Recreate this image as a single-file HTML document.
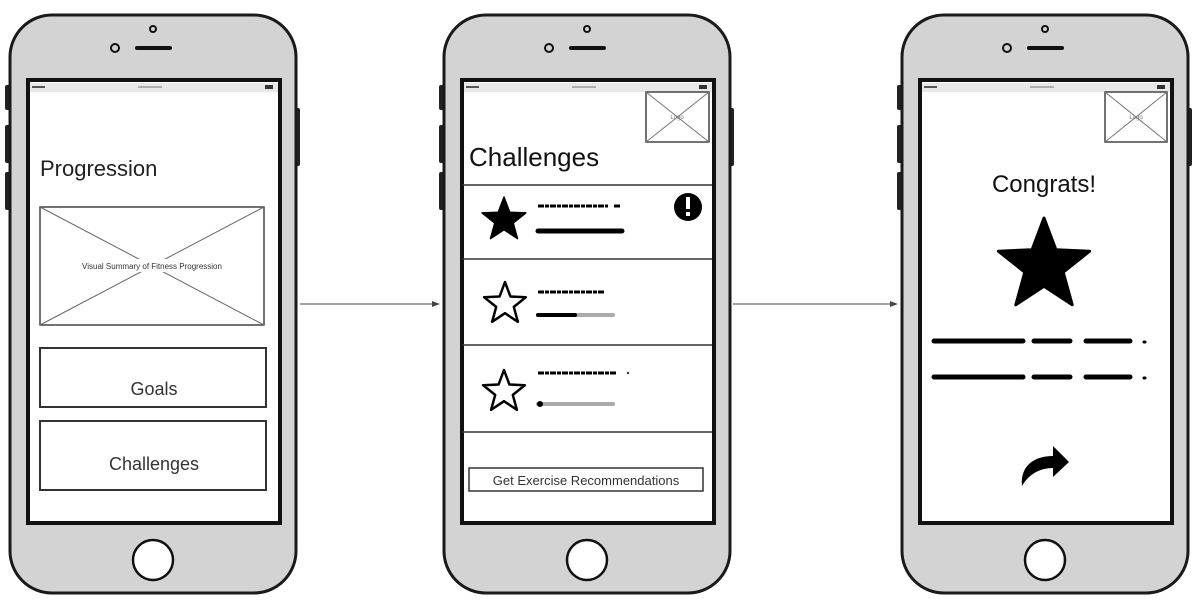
<!DOCTYPE html>
<html><head><meta charset="utf-8"><style>
html,body{margin:0;padding:0;background:#fff;width:1200px;height:604px;overflow:hidden}
svg{display:block}
text{font-family:"Liberation Sans",sans-serif}
</style></head><body>
<svg width="1200" height="604" viewBox="0 0 1200 604" xmlns="http://www.w3.org/2000/svg">
<defs>
<g id="phone">
  <rect x="5" y="85" width="6" height="25" rx="2" fill="#222"/>
  <rect x="5" y="125" width="6" height="38" rx="2" fill="#222"/>
  <rect x="5" y="172" width="6" height="38" rx="2" fill="#222"/>
  <rect x="294" y="108" width="6" height="58" rx="2" fill="#222"/>
  <rect x="10" y="15" width="286" height="578" rx="42" fill="#d3d3d3" stroke="#1a1a1a" stroke-width="3"/>
  <circle cx="153" cy="29" r="3" fill="none" stroke="#111" stroke-width="2"/>
  <circle cx="115" cy="48" r="4" fill="none" stroke="#111" stroke-width="2"/>
  <line x1="137" y1="48" x2="170" y2="48" stroke="#111" stroke-width="4" stroke-linecap="round"/>
  <rect x="28" y="80" width="252" height="443" fill="#fff" stroke="#111" stroke-width="4"/>
  <rect x="30" y="83" width="248" height="9" fill="#e8e8e8"/>
  <line x1="32" y1="87" x2="45" y2="87" stroke="#555" stroke-width="2"/>
  <line x1="138" y1="87" x2="162" y2="87" stroke="#999" stroke-width="1.5"/>
  <rect x="265" y="85" width="8" height="4" fill="#333"/>
  <circle cx="153" cy="560" r="20" fill="#fff" stroke="#111" stroke-width="2.5"/>
</g>
</defs>

<use href="#phone"/>
<use href="#phone" transform="translate(434,0)"/>
<use href="#phone" transform="translate(892,0)"/>

<line x1="300" y1="304" x2="436" y2="304" stroke="#444" stroke-width="1"/>
<polygon points="440,304 432,301 432,307" fill="#444"/>
<line x1="733" y1="304" x2="894" y2="304" stroke="#444" stroke-width="1"/>
<polygon points="898,304 890,301 890,307" fill="#444"/>

<!-- Phone 1 -->
<text x="40" y="176" font-size="22" fill="#222">Progression</text>
<rect x="40" y="207" width="224" height="118" fill="#fff" stroke="#444" stroke-width="1.5"/>
<line x1="40" y1="207" x2="264" y2="325" stroke="#666" stroke-width="1"/>
<line x1="264" y1="207" x2="40" y2="325" stroke="#666" stroke-width="1"/>
<rect x="60" y="259" width="184" height="13" fill="#fff"/>
<text x="152" y="269" font-size="8" text-anchor="middle" fill="#333">Visual Summary of Fitness Progression</text>
<rect x="40" y="348" width="226" height="59" fill="#fff" stroke="#333" stroke-width="2"/>
<text x="154" y="395" font-size="18" text-anchor="middle" fill="#333">Goals</text>
<rect x="40" y="421" width="226" height="69" fill="#fff" stroke="#333" stroke-width="2"/>
<text x="154" y="470" font-size="18" text-anchor="middle" fill="#333">Challenges</text>

<!-- Phone 2 -->
<rect x="646" y="92" width="63" height="50" fill="#fff" stroke="#444" stroke-width="1.5"/>
<line x1="646" y1="92" x2="709" y2="142" stroke="#777"/>
<line x1="709" y1="92" x2="646" y2="142" stroke="#777"/>
<text x="677" y="119" font-size="6" text-anchor="middle" fill="#777">Logo</text>
<text x="469" y="166" font-size="26" fill="#111">Challenges</text>
<g stroke="#333" stroke-width="1.5">
<line x1="462" y1="185" x2="712" y2="185"/>
<line x1="462" y1="259" x2="712" y2="259"/>
<line x1="462" y1="345" x2="712" y2="345"/>
<line x1="462" y1="432" x2="712" y2="432"/>
</g>
<polygon points="504,197 509.7,212.2 525.9,212.9 513.2,223 517.5,238.6 504,229.7 490.5,238.6 494.8,223 482.1,212.9 498.3,212.2" fill="#000" stroke="#000" stroke-width="1.5" stroke-linejoin="round"/>
<circle cx="688" cy="207" r="14" fill="#000"/>
<rect x="686" y="197" width="4" height="12" fill="#fff"/>
<rect x="686" y="212" width="4" height="4" fill="#fff"/>
<line x1="538" y1="206" x2="608" y2="206" stroke="#000" stroke-width="3" stroke-dasharray="6 1 4 1"/>
<line x1="614" y1="206" x2="620" y2="206" stroke="#000" stroke-width="3"/>
<line x1="538" y1="231" x2="622" y2="231" stroke="#000" stroke-width="5" stroke-linecap="round"/>
<polygon points="505,282 510.4,296.5 525.9,297.2 513.8,306.9 517.9,321.8 505,313.2 492.1,321.8 496.2,306.9 484.1,297.2 499.6,296.5" fill="#fff" stroke="#000" stroke-width="2.5" stroke-linejoin="round"/>
<line x1="538" y1="292" x2="604" y2="292" stroke="#000" stroke-width="3" stroke-dasharray="6 1 4 1"/>
<line x1="538" y1="315" x2="613" y2="315" stroke="#aaa" stroke-width="4" stroke-linecap="round"/>
<line x1="538" y1="315" x2="575" y2="315" stroke="#000" stroke-width="4" stroke-linecap="round"/>
<polygon points="504,370 509.4,384.5 524.9,385.2 512.8,394.9 516.9,409.8 504,401.2 491.1,409.8 495.2,394.9 483.1,385.2 498.6,384.5" fill="#fff" stroke="#000" stroke-width="2.5" stroke-linejoin="round"/>
<line x1="538" y1="373" x2="616" y2="373" stroke="#000" stroke-width="3" stroke-dasharray="6 1 4 1"/>
<circle cx="628" cy="373" r="1.2" fill="#333"/>
<line x1="538" y1="404" x2="613" y2="404" stroke="#aaa" stroke-width="4" stroke-linecap="round"/>
<circle cx="540" cy="404" r="3" fill="#000"/>
<rect x="469" y="468" width="234" height="23" fill="#fff" stroke="#333" stroke-width="1.5"/>
<text x="586" y="485" font-size="13" text-anchor="middle" fill="#333">Get Exercise Recommendations</text>

<!-- Phone 3 -->
<rect x="1105" y="92" width="62" height="50" fill="#fff" stroke="#444" stroke-width="1.5"/>
<line x1="1105" y1="92" x2="1167" y2="142" stroke="#777"/>
<line x1="1167" y1="92" x2="1105" y2="142" stroke="#777"/>
<text x="1136" y="119" font-size="6" text-anchor="middle" fill="#777">Logo</text>
<text x="1044" y="192" font-size="24" text-anchor="middle" fill="#111">Congrats!</text>
<polygon points="1044,218 1055.9,249.7 1089.6,251.2 1063.2,272.2 1072.2,304.8 1044,286.2 1015.8,304.8 1024.8,272.2 998.4,251.2 1032.1,249.7" fill="#000" stroke="#000" stroke-width="3" stroke-linejoin="round"/>
<g stroke="#000" stroke-width="5" stroke-linecap="round">
<line x1="934" y1="341" x2="1024" y2="341" stroke-dasharray="8 1 5 1"/>
<line x1="1034" y1="341" x2="1070" y2="341" stroke-dasharray="8 1 5 1"/>
<line x1="1086" y1="341" x2="1130" y2="341" stroke-dasharray="8 1 5 1"/>
<line x1="1144" y1="342" x2="1145" y2="342" stroke-width="3"/>
<line x1="934" y1="377" x2="1024" y2="377" stroke-dasharray="8 1 5 1"/>
<line x1="1034" y1="377" x2="1070" y2="377" stroke-dasharray="8 1 5 1"/>
<line x1="1086" y1="377" x2="1130" y2="377" stroke-dasharray="8 1 5 1"/>
<line x1="1144" y1="378" x2="1145" y2="378" stroke-width="3"/>
</g>
<path d="M1022 486 C1020 466 1034 456 1053 456 L1053 446 L1069 462 L1053 477 L1053 468 C1040 468 1029 474 1022 486 Z" fill="#000"/>
</svg>
</body></html>
